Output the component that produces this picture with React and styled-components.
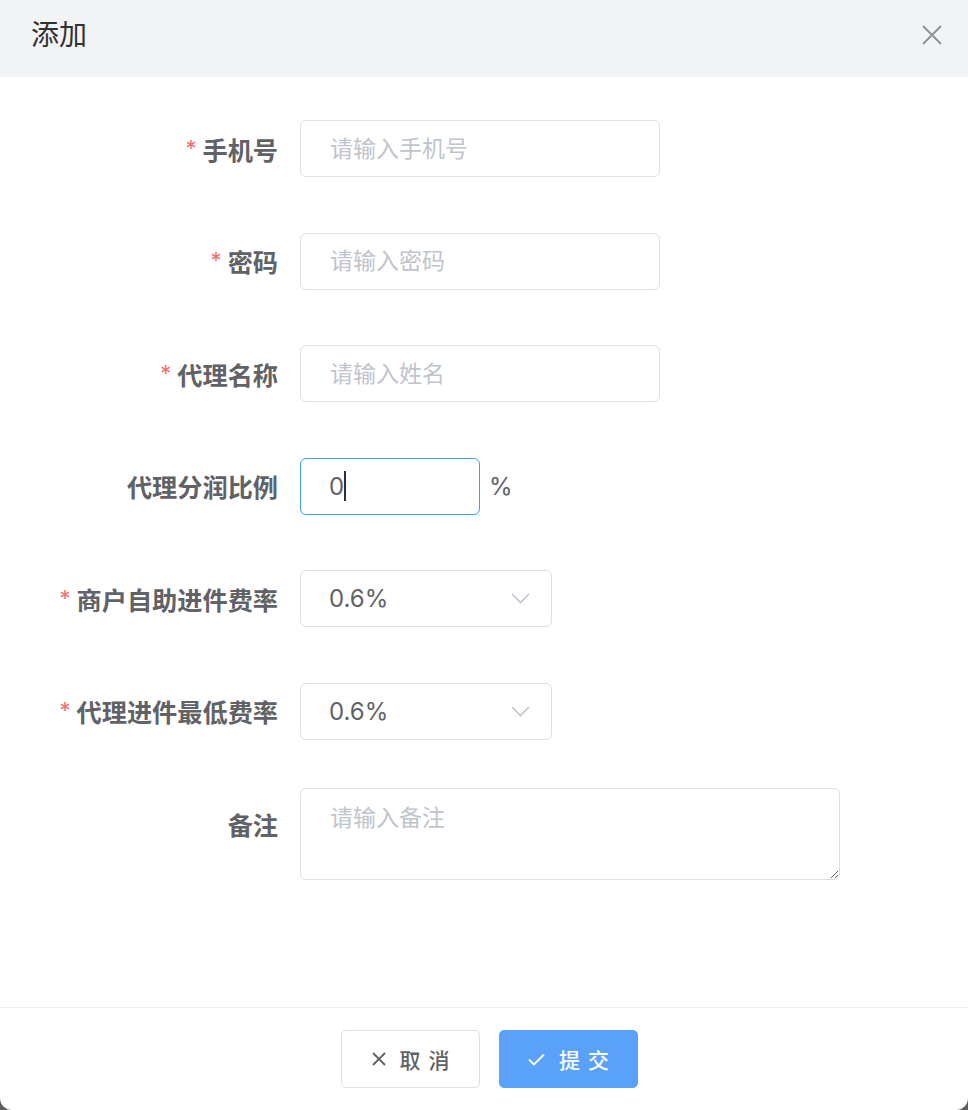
import React from "react";
import styled, { createGlobalStyle } from "styled-components";

const GlobalStyle = createGlobalStyle`
  html, body {
    margin: 0;
    padding: 0;
    background: #5f5f5f;
  }
  * {
    box-sizing: border-box;
  }
`;

const FONT = `Inter, "Noto Sans CJK SC", "Noto Sans", sans-serif`;

// Dialog shell
const Dialog = styled.div`
  width: 968px;
  height: 1110px;
  background: #ffffff;
  display: flex;
  flex-direction: column;
  border-radius: 0 0 12px 12px;
  overflow: hidden;
  font-family: ${FONT};
`;

const Header = styled.header`
  height: 77px;
  flex-shrink: 0;
  background: #f2f3f5;
  display: flex;
  align-items: center;
  justify-content: space-between;
  padding: 0 24px 8px 31px;
`;

const Title = styled.h2`
  margin: 0;
  font-size: 28px;
  font-weight: 400;
  color: #303133;
  line-height: 1;
`;

const CloseBtn = styled.button`
  width: 24px;
  height: 24px;
  padding: 0;
  border: none;
  background: transparent;
  display: flex;
  align-items: center;
  justify-content: center;
  cursor: pointer;
`;

// Form body
const Body = styled.div`
  flex: 1;
  padding-top: 43px;
`;

const Form = styled.form`
  display: flex;
  flex-direction: column;
  gap: 55.6px;
`;

const Row = styled.div`
  display: flex;
  align-items: flex-start;
`;

const Label = styled.label`
  width: 300px;
  flex-shrink: 0;
  padding-right: 22px;
  height: 57px;
  display: flex;
  align-items: center;
  justify-content: flex-end;
  font-size: 25.2px;
  font-weight: 700;
  color: #606266;
`;

const Star = styled.span`
  color: #f56c6c;
  font-size: 22px;
  font-weight: 400;
  margin-right: 6px;
  position: relative;
  top: -1px;
`;

const Control = styled.div`
  display: flex;
  align-items: center;
  gap: 9px;
`;

const Input = styled.input`
  width: ${({ w }) => w}px;
  height: 57px;
  border: 1px solid #dcdfe6;
  border-radius: 6px;
  padding: 0 20px 0 29px;
  font-family: ${FONT};
  font-size: 23px;
  color: #606266;
  outline: none;
  background: #fff;

  &::placeholder {
    color: #c0c4cc;
  }
`;

const FocusBox = styled.div`
  width: ${({ w }) => w}px;
  height: 57px;
  border: 1px solid #409eff;
  border-radius: 6px;
  padding: 0 20px 0 28px;
  display: flex;
  align-items: center;
  font-size: 24px;
  color: #606266;
`;

const Caret = styled.span`
  display: inline-block;
  width: 2px;
  height: 30px;
  background: #303133;
`;

const Suffix = styled.span`
  font-size: 24px;
  color: #606266;
`;

const SelectBox = styled.div`
  width: 252px;
  height: 57px;
  border: 1px solid #dcdfe6;
  border-radius: 6px;
  padding: 0 21px 0 28px;
  display: flex;
  align-items: center;
  justify-content: space-between;
  font-size: 24px;
  color: #606266;
  cursor: pointer;
`;

const TextArea = styled.textarea`
  width: 540px;
  height: 92px;
  margin-top: -8px;
  border: 1px solid #dcdfe6;
  border-radius: 6px;
  padding: 10px 20px 0 29px;
  font-family: ${FONT};
  font-size: 23px;
  color: #606266;
  outline: none;
  resize: vertical;

  &::placeholder {
    color: #c0c4cc;
  }
`;

// Footer
const Footer = styled.footer`
  flex-shrink: 0;
  border-top: 1px solid #ebeef5;
  padding: 22px 0 22px 11px;
  display: flex;
  justify-content: center;
  gap: 19px;
`;

const Button = styled.button`
  width: 139px;
  height: 58px;
  border-radius: 5px;
  border: 1px solid ${({ primary }) => (primary ? "#5aa1fa" : "#dcdfe6")};
  background: ${({ primary }) => (primary ? "#5aa1fa" : "#fff")};
  color: ${({ primary }) => (primary ? "#fff" : "#606266")};
  font-family: ${FONT};
  font-size: 21px;
  font-weight: 500;
  display: flex;
  align-items: center;
  justify-content: center;
  gap: 14px;
  padding: 0 0 0 8px;
  cursor: pointer;
`;

const BtnText = styled.span`
  letter-spacing: 8px;
`;

const CloseIcon = () => (
  <svg width="20" height="20" viewBox="0 0 20 20">
    <path d="M1 1L19 19M19 1L1 19" stroke="#909399" strokeWidth="2" fill="none" />
  </svg>
);

const Chevron = () => (
  <svg width="19" height="11" viewBox="0 0 19 11">
    <path d="M1 1L9.5 9.5L18 1" stroke="#c0c4cc" strokeWidth="1.6" fill="none" />
  </svg>
);

const XIcon = ({ color }) => (
  <svg width="14" height="14" viewBox="0 0 14 14">
    <path d="M1 1L13 13M13 1L1 13" stroke={color} strokeWidth="1.8" fill="none" />
  </svg>
);

const CheckIcon = ({ color }) => (
  <svg width="17" height="13" viewBox="0 0 17 13">
    <path d="M1 6.5L6 11.5L16 1.5" stroke={color} strokeWidth="1.8" fill="none" />
  </svg>
);

const Field = ({ label, required, children }) => (
  <Row>
    <Label>
      {required && <Star>*</Star>}
      {label}
    </Label>
    <Control>{children}</Control>
  </Row>
);

export default function App() {
  return (
    <>
      <GlobalStyle />
      <Dialog>
        <Header>
          <Title>添加</Title>
          <CloseBtn type="button" aria-label="close">
            <CloseIcon />
          </CloseBtn>
        </Header>
        <Body>
          <Form onSubmit={(e) => e.preventDefault()}>
            <Field label="手机号" required>
              <Input w={360} placeholder="请输入手机号" readOnly />
            </Field>
            <Field label="密码" required>
              <Input w={360} placeholder="请输入密码" readOnly />
            </Field>
            <Field label="代理名称" required>
              <Input w={360} placeholder="请输入姓名" readOnly />
            </Field>
            <Field label="代理分润比例">
              <FocusBox w={180}>
                0<Caret />
              </FocusBox>
              <Suffix>%</Suffix>
            </Field>
            <Field label="商户自助进件费率" required>
              <SelectBox>
                0.6%
                <Chevron />
              </SelectBox>
            </Field>
            <Field label="代理进件最低费率" required>
              <SelectBox>
                0.6%
                <Chevron />
              </SelectBox>
            </Field>
            <Field label="备注">
              <TextArea placeholder="请输入备注" readOnly />
            </Field>
          </Form>
        </Body>
        <Footer>
          <Button type="button">
            <XIcon color="#606266" />
            <BtnText>取消</BtnText>
          </Button>
          <Button type="button" primary>
            <CheckIcon color="#ffffff" />
            <BtnText>提交</BtnText>
          </Button>
        </Footer>
      </Dialog>
    </>
  );
}
